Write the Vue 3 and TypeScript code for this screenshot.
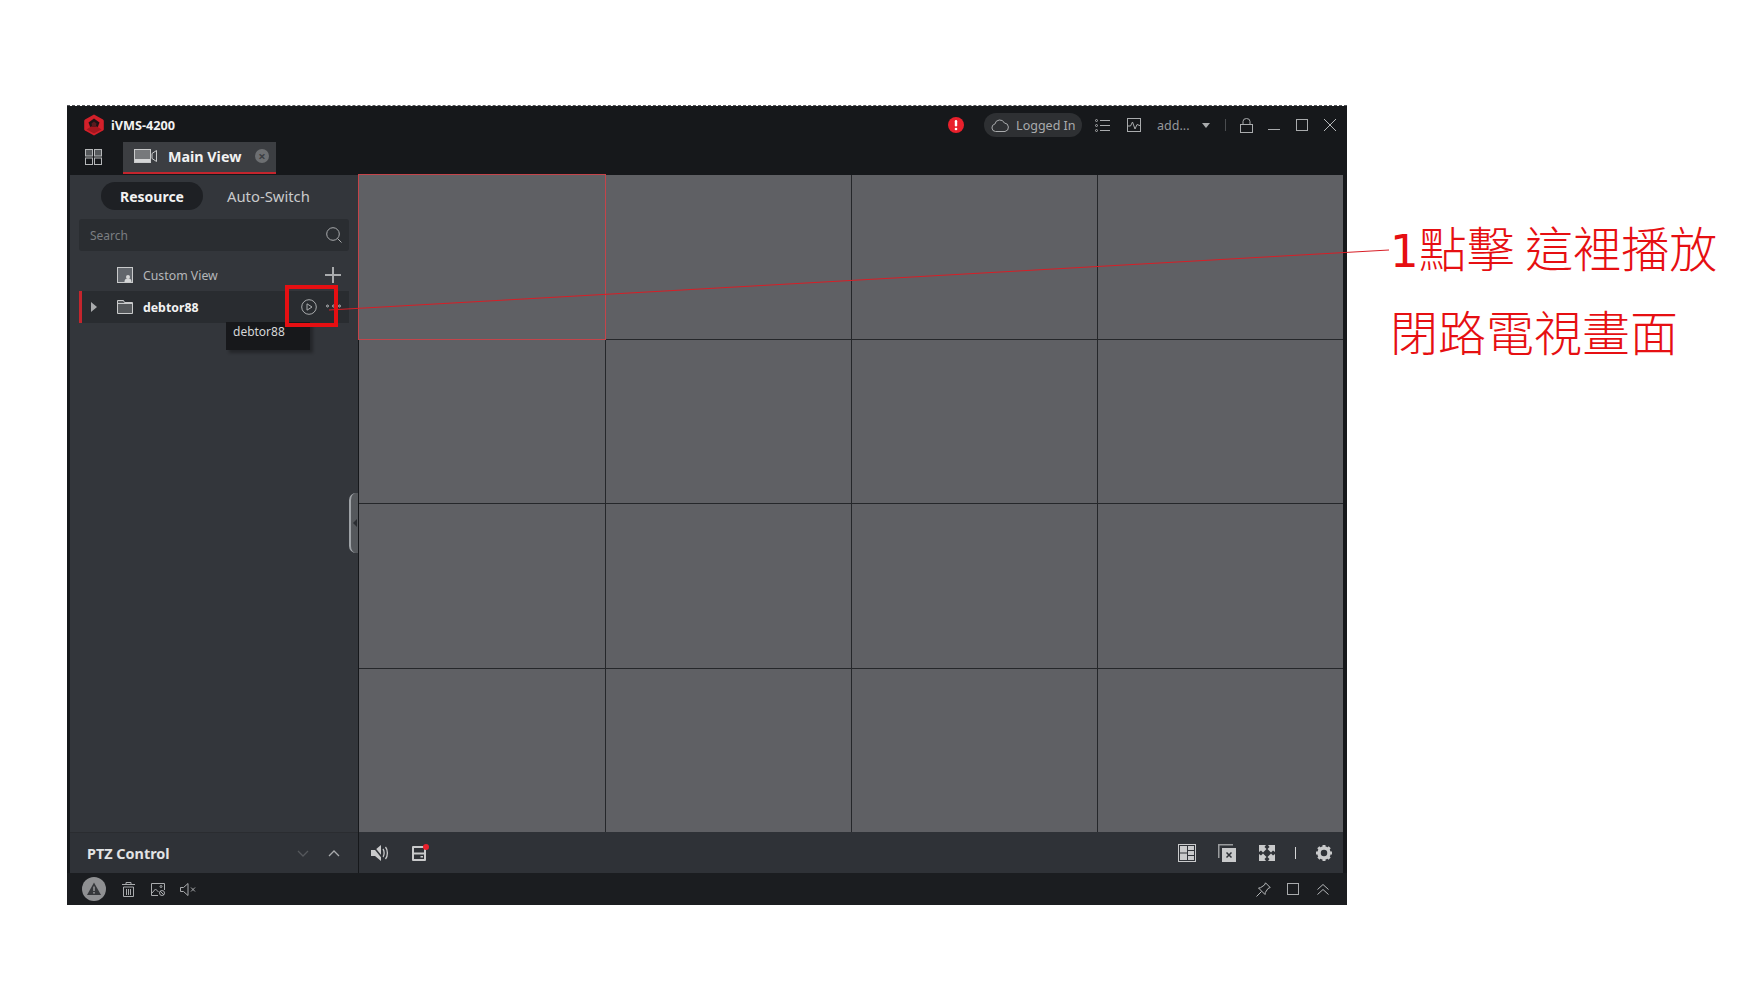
<template>
  <div class="page">
    <section class="window">
      <header class="titlebar">
        <svg class="logo" width="20" height="22" viewBox="0 0 20 22">
          <path d="M10 0.500 19 5.500q.8.500.8 1.500v8q0 1-.8 1.500L10 21.500 1 16.500q-.8-.5-.8-1.500V7q0-1 .8-1.500z" fill="#d3202a" />
          <path d="M10 4.500 15.500 8.500 13.500 14H6.500L4.500 8.500z" fill="#1b1416" />
          <path d="M2.500 15.500 7 12.500h6l4.500 3L10 19.500z" fill="#a5161e" />
          <path d="M10 7.500 12.500 9.500 12 12H8L7.500 9.500z" fill="#5a1a1e" />
        </svg>
        <span class="app-name">iVMS-4200</span>
        <svg class="alert" width="16" height="16" viewBox="0 0 16 16">
          <circle cx="8" cy="8" r="8" fill="#e9202c" />
          <rect x="6.800" y="3" width="2.400" height="6.500" rx="1.200" fill="#fff" />
          <circle cx="8" cy="12" r="1.300" fill="#fff" />
        </svg>
        <div class="login-pill">
          <svg width="18" height="13" viewBox="0 0 18 13" fill="none" stroke="#a9abad" stroke-width="1">
            <path d="M4.500 12.500a3.800 3.800 0 0 1-.6-7.500 5 5 0 0 1 9.500-1 4.300 4.300 0 0 1 .6 8.500z" />
          </svg>
          <span>Logged In</span>
        </div>
        <svg class="ti ti-list" width="15" height="13" viewBox="0 0 15 13" fill="none" stroke="#a9abad">
          <circle cx="1.500" cy="1.500" r="1" /><circle cx="1.500" cy="6.500" r="1" /><circle cx="1.500" cy="11.500" r="1" />
          <path d="M5 1.500h10M5 6.500h10M5 11.500h10" />
        </svg>
        <svg class="ti ti-chart" width="14" height="14" viewBox="0 0 14 14" fill="none" stroke="#a9abad">
          <rect x=".5" y=".5" width="13" height="13" />
          <path d="M1 8h2.500l2-4 2.500 7 2-4.500L14 8" />
        </svg>
        <span class="user">add...</span>
        <span class="caret"></span>
        <span class="vline"></span>
        <svg class="ti ti-lock" width="13" height="15" viewBox="0 0 13 15" fill="none" stroke="#a9abad">
          <rect x=".5" y="6.500" width="12" height="8" /><path d="M3 6.500V3.500a3.500 3 0 0 1 7 0v3" />
        </svg>
        <span class="win-min"></span>
        <span class="win-max"></span>
        <svg class="win-close" width="12" height="12" viewBox="0 0 12 12" stroke="#b5b7b9">
          <path d="M0 0 12 12M12 0 0 12" />
        </svg>
      </header>

      <nav class="tabbar">
        <svg class="apps" width="17" height="16" viewBox="0 0 17 16" fill="#55585b" stroke="#b5b7b9">
          <rect x=".5" y=".5" width="7" height="6.500" /><rect x="9.500" y=".5" width="7" height="6.500" />
          <rect x=".5" y="9" width="7" height="6.500" fill="none" /><rect x="9.500" y="9" width="7" height="6.500" fill="none" />
        </svg>
        <div class="tab">
          <svg width="23" height="14" viewBox="0 0 23 14">
            <rect x=".5" y=".5" width="16" height="13" fill="#77797c" stroke="#c9cacb" />
            <path d="M1 10h15v3H1z" fill="#d5d6d7" />
            <path d="M18 4.500 22.500 1.500v11L18 9.500z" fill="none" stroke="#c9cacb" />
          </svg>
          <span class="tab-title">Main View</span>
          <span class="tab-close">×</span>
        </div>
      </nav>

      <main class="workspace">
        <aside class="sidebar">
          <div class="side-tabs">
            <span class="side-tab side-tab--active">Resource</span>
            <span class="side-tab">Auto-Switch</span>
          </div>
          <div class="search">
            <span>Search</span>
            <svg width="16" height="16" viewBox="0 0 16 16" fill="none" stroke="#a9abad">
              <circle cx="7" cy="7" r="6.300" /><path d="m11.500 11.500 4 4" />
            </svg>
          </div>
          <div class="tree-row">
            <svg class="tree-icon" width="16" height="16" viewBox="0 0 16 16">
              <rect x=".5" y=".5" width="15" height="15" fill="#62666c" stroke="#c9cacb" />
              <circle cx="11" cy="10" r="2" fill="#d5d6d7" /><path d="M7.500 15c0-3 1.500-3.500 3.500-3.500s3.500.5 3.500 3.500z" fill="#d5d6d7" />
            </svg>
            <span class="custom-label">Custom View</span>
            <svg class="plus" width="16" height="16" viewBox="0 0 16 16" stroke="#a9abad" stroke-width="2">
              <path d="M8 0v16M0 8h16" />
            </svg>
          </div>
          <div class="tree-row tree-row--active">
            <span class="arrow"></span>
            <svg class="tree-icon" width="16" height="14" viewBox="0 0 16 14" fill="#55585b" stroke="#c9cacb">
              <path d="M.5.5h6l1 2h8v11H.5z" /><path d="M.5 3.500h15" />
            </svg>
            <span class="device-label">debtor88</span>
            <svg class="play" width="16" height="16" viewBox="0 0 16 16" fill="none" stroke="#a9abad">
              <circle cx="8" cy="8" r="7.300" /><path d="M6 4.800v6.400l5-3.200z" />
            </svg>
            <svg class="more" width="15" height="4" viewBox="0 0 15 4" fill="none" stroke="#b5b7b9">
              <circle cx="1.500" cy="2" r="1" /><circle cx="7.500" cy="2" r="1" /><circle cx="13.500" cy="2" r="1" />
            </svg>
          </div>
          <div class="tooltip">debtor88</div>
          <div class="collapse"><span></span></div>
        </aside>
        <div class="grid">
          <div
            v-for="cell in cells"
            :key="cell"
            class="cell"
            :class="{ 'cell--selected': cell === 0 }"
          ></div>
        </div>
      </main>

      <div class="controls">
        <div class="ptz">
          <span class="ptz-title">PTZ Control</span>
          <svg class="chev-down" width="12" height="7" viewBox="0 0 12 7" fill="none" stroke="#55585c" stroke-width="1.300">
            <path d="m1 1 5 5 5-5" />
          </svg>
          <svg class="chev-up" width="12" height="7" viewBox="0 0 12 7" fill="none" stroke="#a9abad" stroke-width="1.300">
            <path d="m1 6 5-5 5 5" />
          </svg>
        </div>
        <div class="toolbar">
          <svg class="tb-sound" width="18" height="16" viewBox="0 0 18 16">
            <path d="M0 5h4l6-5v16l-6-5H0z" fill="#c9cacb" />
            <path d="M12 4c1.500 2 1.500 6 0 8M14.500 2c2.500 3 2.500 9 0 12" fill="none" stroke="#c9cacb" stroke-width="1.300" />
            <path d="m1 0 13 16" stroke="#2f3237" stroke-width="1.500" />
          </svg>
          <span class="tb-record">
            <svg width="16" height="16" viewBox="0 0 16 16">
              <rect x="1" y="1" width="14" height="15" rx="1" fill="#c9cacb" />
              <rect x="3" y="3" width="10" height="4.500" fill="#2f3237" />
              <rect x="3" y="9.500" width="10" height="4.500" fill="#2f3237" />
              <rect x="9.500" y="11" width="2.500" height="1.500" fill="#c9cacb" />
            </svg>
            <i></i>
          </span>
          <svg class="tb-layout" width="18" height="18" viewBox="0 0 18 18" fill="#c9cacb" stroke="none">
            <path d="M0 0h18v18H0zM1 1v16h16V1z" />
            <rect x="2" y="2" width="7" height="14" /><rect x="10" y="2" width="6" height="4" /><rect x="10" y="7" width="6" height="4" /><rect x="10" y="12" width="6" height="4" />
            <path d="M2 8.500h7v1H2z" fill="#2f3237" />
          </svg>
          <svg class="tb-close" width="18" height="18" viewBox="0 0 18 18">
            <path d="M0 0h15v1.500H1.500V14H0z" fill="#9a9c9e" />
            <rect x="4" y="4" width="14" height="14" fill="#c9cacb" />
            <path d="m8.500 8.500 5 5m0-5-5 5" stroke="#2f3237" stroke-width="1.500" />
          </svg>
          <svg class="tb-full" width="16" height="16" viewBox="0 0 16 16" fill="#c9cacb">
            <path d="M0 0h7L5.500 2l2 2-3.500 3.500-2-2L0 7z" />
            <path d="M16 0H9l1.500 2-2 2L12 7.500l2-2L16 7z" />
            <path d="M0 16h7l-1.500-2 2-2L4 8.500l-2 2L0 9z" />
            <path d="M16 16H9l1.500-2-2-2L12 8.500l2 2L16 9z" />
          </svg>
          <span class="tb-sep"></span>
          <svg class="tb-gear" width="16" height="16" viewBox="0 0 16 16">
            <circle cx="8" cy="8" r="5" fill="none" stroke="#c9cacb" stroke-width="3.500" />
            <path d="M8 0v16M0 8h16M2.300 2.300l11.400 11.400M13.700 2.300 2.300 13.700" stroke="#c9cacb" stroke-width="3" stroke-dasharray="2.500 11" stroke-dashoffset="0" />
          </svg>
        </div>
      </div>

      <footer class="statusbar">
        <svg class="st-warn" width="24" height="24" viewBox="0 0 24 24">
          <circle cx="12" cy="12" r="12" fill="#8f9092" />
          <path d="M12 5.500 19 18H5z" fill="#36383b" />
          <rect x="11.200" y="9.500" width="1.600" height="4.500" fill="#8f9092" />
          <rect x="11.200" y="15" width="1.600" height="1.600" fill="#8f9092" />
        </svg>
        <svg class="st-trash" width="13" height="15" viewBox="0 0 13 15" fill="none" stroke="#a9abad">
          <path d="M0 2.500h13M4 2.500V.5h5v2M1.500 5h10v9.500h-10zM4.500 7v6M6.500 7v6M8.500 7v6" />
        </svg>
        <svg class="st-pic" width="14" height="13" viewBox="0 0 14 13" fill="none" stroke="#a9abad">
          <path d="M7 12.500H.5V.5h13V7" /><path d="m1 10 3.500-4 3 3" /><circle cx="10" cy="3.500" r="1" /><circle cx="11" cy="10" r="2.500" /><path d="m9 8 4 4" />
        </svg>
        <svg class="st-mute" width="16" height="13" viewBox="0 0 16 13" fill="none" stroke="#a9abad">
          <path d="M.5 4.500h3L8 .5v12l-4.500-4h-3zM11 4.500l4 4m0-4-4 4" />
        </svg>
        <svg class="st-pin" width="15" height="15" viewBox="0 0 15 15" fill="none" stroke="#b5b7b9">
          <path d="M9.500.8 14.200 5.500 12 6.500 9.300 10.500 9 12.500 2.500 6 4.500 5.700 8.500 3zM5.500 9.500.5 14.500" />
        </svg>
        <span class="st-square"></span>
        <svg class="st-up" width="12" height="11" viewBox="0 0 12 11" fill="none" stroke="#b5b7b9">
          <path d="m.5 5.500 5.500-5 5.500 5M.5 10.500l5.500-5 5.500 5" />
        </svg>
      </footer>
    </section>

    <div class="annotation">
      <p><span class="step">1</span>點擊 這裡播放</p>
      <p>閉路電視畫面</p>
    </div>

    <svg class="markup" width="1743" height="1000" viewBox="0 0 1743 1000" fill="none">
      <path d="M329 310 1389 250" stroke="#d81e26" stroke-width="1" />
      <rect x="287" y="287" width="49" height="38" stroke="#e60f12" stroke-width="4" />
    </svg>
  </div>
</template>

<script setup lang="ts">
const cells: number[] = Array.from({ length: 16 }, (_, index) => index);
</script>

<style>
html,
body {
  margin: 0;
  background: #fff;
}
</style>

<style scoped>
.page {
  position: relative;
  display: flex;
  box-sizing: border-box;
  width: 1743px;
  height: 1000px;
  padding: 106px 0 0 67px;
  overflow: hidden;
  background: #fff;
  font-family: "Noto Sans", "Liberation Sans", sans-serif;
}

.window {
  position: relative;
  display: flex;
  flex-direction: column;
  flex: none;
  width: 1280px;
  height: 799px;
  background: #16181b;
}

.window::before {
  content: "";
  position: absolute;
  top: -1px;
  left: 0;
  right: 0;
  border-top: 1px dashed #55565a;
}

.titlebar {
  display: flex;
  align-items: center;
  flex: none;
  height: 38px;
  padding-left: 17px;
}

.logo {
  flex: none;
}

.app-name {
  margin-left: 7px;
  color: #f2f2f2;
  font-size: 12.700px;
  font-weight: 700;
}

.alert {
  margin-left: 773px;
}

.login-pill {
  display: flex;
  align-items: center;
  gap: 7px;
  box-sizing: border-box;
  width: 98px;
  height: 24px;
  margin-left: 20px;
  padding-left: 7px;
  border-radius: 12px;
  background: #2e3033;
  color: #a9abad;
  font-size: 12.500px;
}

.ti-list {
  margin-left: 13px;
}

.ti-chart {
  margin-left: 17px;
}

.user {
  margin-left: 16px;
  color: #94979b;
  font-size: 12.500px;
}

.caret {
  width: 0;
  height: 0;
  margin-left: 12px;
  border-top: 5px solid #a9abad;
  border-left: 4px solid transparent;
  border-right: 4px solid transparent;
}

.vline {
  width: 1px;
  height: 12px;
  margin-left: 15px;
  background: #4a4c4f;
}

.ti-lock {
  margin-left: 14px;
}

.win-min {
  width: 12px;
  height: 1px;
  margin: 9px 0 0 15px;
  background: #a9abad;
}

.win-max {
  box-sizing: border-box;
  width: 12px;
  height: 12px;
  margin-left: 16px;
  border: 1px solid #a9abad;
}

.win-close {
  margin-left: 16px;
}

.tabbar {
  display: flex;
  align-items: flex-end;
  flex: none;
  height: 31px;
  padding-left: 18px;
}

.apps {
  margin: 0 21px 10px 0;
}

.tab {
  display: flex;
  align-items: center;
  box-sizing: border-box;
  width: 153px;
  height: 32px;
  margin-bottom: 1px;
  padding: 0 7px 2px 11px;
  border-bottom: 2px solid #c4252d;
  background: #3c3e42;
}

.tab-title {
  margin-left: 11px;
  color: #f2f2f2;
  font-size: 14.300px;
  font-weight: 700;
}

.tab-close {
  display: flex;
  align-items: center;
  justify-content: center;
  width: 14px;
  height: 14px;
  margin-left: auto;
  border-radius: 50%;
  background: #6d6f72;
  color: #3c3e42;
  font-size: 13px;
  font-weight: 700;
  line-height: 1;
}

.workspace {
  display: flex;
  flex: none;
  height: 657px;
  padding: 0 4px 0 3px;
}

.sidebar {
  position: relative;
  flex: none;
  box-sizing: border-box;
  width: 288px;
  padding: 7px 9px 0;
  background: #33363b;
}

.side-tabs {
  display: flex;
  align-items: center;
  gap: 24px;
  height: 28px;
  padding-left: 22px;
}

.side-tab {
  color: #c9cacb;
  font-size: 14.800px;
  line-height: 29px;
}

.side-tab--active {
  box-sizing: border-box;
  width: 102px;
  height: 28px;
  border-radius: 14px;
  background: #1e2024;
  color: #f2f2f2;
  font-size: 14px;
  font-weight: 700;
  text-align: center;
}

.search {
  display: flex;
  align-items: center;
  justify-content: space-between;
  box-sizing: border-box;
  height: 32px;
  margin-top: 9px;
  padding: 0 7px 0 11px;
  border-radius: 3px;
  background: #2a2d31;
  color: #7b7e82;
  font-size: 12px;
}

.tree-row {
  position: relative;
  display: flex;
  align-items: center;
  height: 32px;
  padding-left: 38px;
}

.search + .tree-row {
  margin-top: 8px;
}

.tree-row--active {
  padding-left: 35px;
  border-left: 3px solid #c4252d;
  background: #292c30;
}

.custom-label {
  margin-left: 10px;
  color: #b5b7b9;
  font-size: 12.300px;
}

.plus {
  margin-left: auto;
  margin-right: 8px;
}

.arrow {
  position: absolute;
  left: 9px;
  top: 11px;
  width: 0;
  height: 0;
  border-left: 6px solid #a9abad;
  border-top: 5px solid transparent;
  border-bottom: 5px solid transparent;
}

.device-label {
  margin-left: 10px;
  color: #f2f2f2;
  font-size: 12.300px;
  font-weight: 700;
}

.play {
  margin-left: auto;
}

.more {
  margin: 0 8px 2px 9px;
}

.tooltip {
  position: absolute;
  left: 156px;
  top: 147px;
  box-sizing: border-box;
  width: 84px;
  height: 28px;
  padding-left: 7px;
  background: #17181b;
  box-shadow: 3px 3px 3px rgba(0, 0, 0, 0.3);
  color: #d5d6d7;
  font-size: 12px;
  line-height: 19px;
}

.collapse {
  position: absolute;
  top: 318px;
  right: 0;
  display: flex;
  align-items: center;
  box-sizing: border-box;
  width: 9px;
  height: 60px;
  padding-left: 2px;
  border-left: 2px solid #9ea2a6;
  border-radius: 7px 0 0 7px;
  background: #55585c;
}

.collapse span {
  width: 0;
  height: 0;
  border-right: 4px solid #2a2d31;
  border-top: 4px solid transparent;
  border-bottom: 4px solid transparent;
}

.grid {
  display: grid;
  flex: 1;
  grid-template-columns: 246px repeat(3, 1fr);
  grid-template-rows: 164px 163px 164px 163px;
  gap: 1px;
  margin-left: 1px;
  background: #25272a;
}

.cell {
  background: #5f6064;
}

.cell--selected {
  position: relative;
  z-index: 1;
  outline: 1px solid #c4444a;
}

.controls {
  display: flex;
  flex: none;
  height: 41px;
  padding: 0 4px 0 3px;
}

.ptz {
  display: flex;
  align-items: center;
  flex: none;
  box-sizing: border-box;
  width: 288px;
  padding-left: 17px;
  border-top: 1px solid #2a2c30;
  background: #2f3237;
}

.ptz-title {
  color: #e2e3e4;
  font-size: 14.400px;
  font-weight: 700;
}

.chev-down {
  margin-left: auto;
}

.chev-up {
  margin: 0 18px 0 19px;
}

.toolbar {
  display: flex;
  align-items: center;
  flex: 1;
  margin-left: 1px;
  padding-left: 12px;
  background: #2f3237;
}

.tb-record {
  position: relative;
  display: flex;
  margin-left: 22px;
}

.tb-record i {
  position: absolute;
  top: -1px;
  right: -2px;
  width: 6px;
  height: 6px;
  border-radius: 50%;
  background: #e9202c;
}

.tb-layout {
  margin-left: auto;
}

.tb-close {
  margin-left: 22px;
}

.tb-full {
  margin-left: 23px;
}

.tb-sep {
  width: 1px;
  height: 12px;
  margin-left: 20px;
  background: #d5d6d7;
}

.tb-gear {
  margin: 0 11px 0 20px;
}

.statusbar {
  display: flex;
  align-items: center;
  flex: 1;
  padding-left: 15px;
  background: #1b1d20;
}

.st-trash {
  margin-left: 16px;
}

.st-pic {
  margin-left: 16px;
}

.st-mute {
  margin-left: 15px;
}

.st-pin {
  margin-left: auto;
}

.st-square {
  box-sizing: border-box;
  width: 12px;
  height: 12px;
  margin-left: 16px;
  border: 1px solid #a9abad;
}

.st-up {
  margin: 0 18px 0 18px;
}

.annotation {
  margin-left: 43px;
  padding-top: 98px;
  color: #e60f12;
  font-family: "Noto Sans CJK TC", "Noto Sans", sans-serif;
  font-size: 48px;
  font-weight: 300;
  line-height: 84px;
  white-space: nowrap;
}

.annotation p {
  margin: 0;
}

.step {
  font-family: "DejaVu Sans", sans-serif;
  font-size: 45px;
  font-weight: 400;
  line-height: 0;
}

.markup {
  position: absolute;
  top: 0;
  left: 0;
  z-index: 2;
  pointer-events: none;
}
</style>
